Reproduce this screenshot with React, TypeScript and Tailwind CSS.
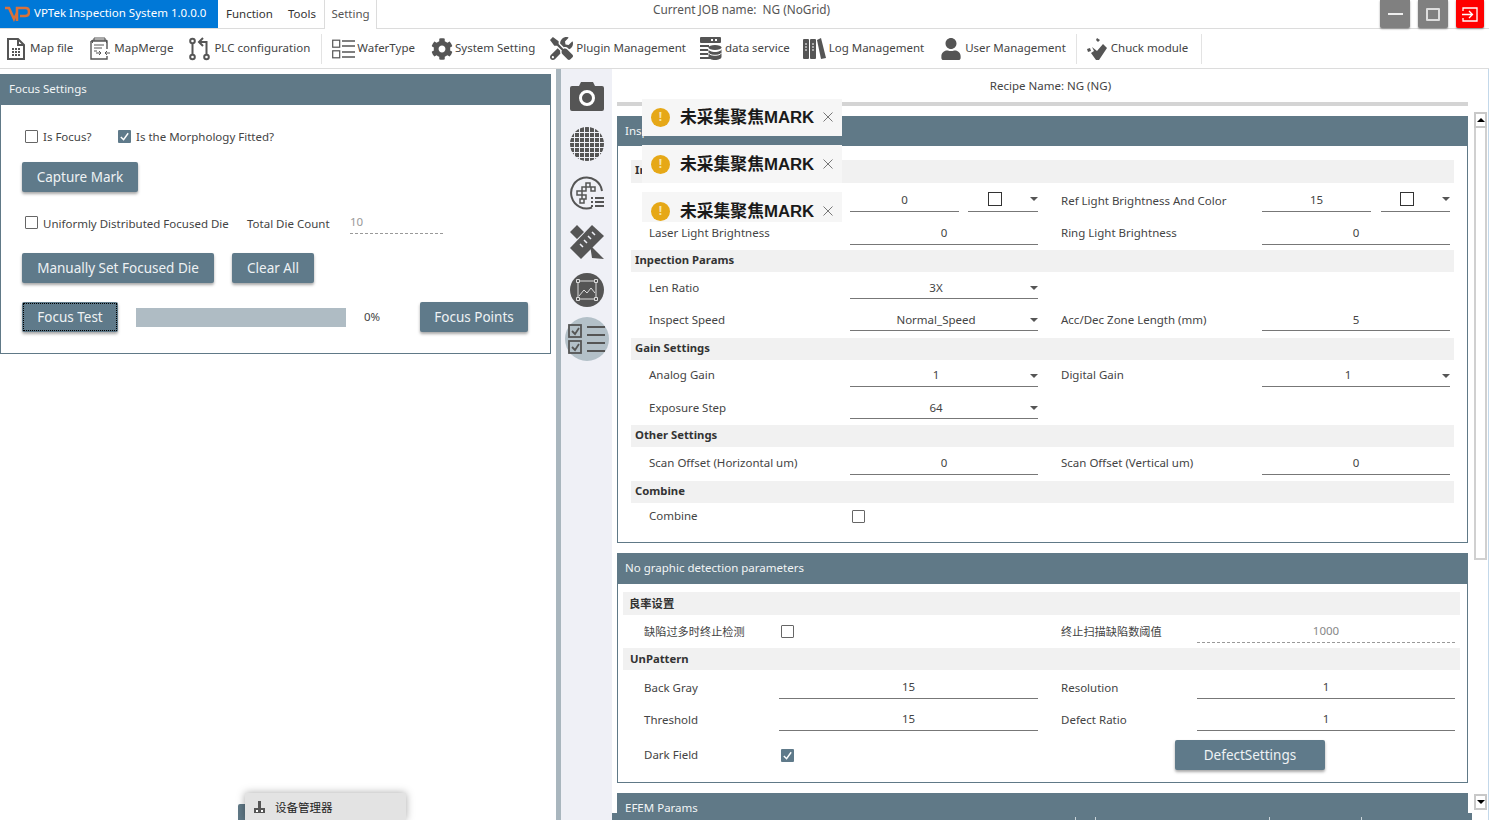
import React from "react";
import { FaCog, FaUser, FaTools } from "react-icons/fa";

const FONT = "font-['Noto_Sans','Noto_Sans_CJK_SC',sans-serif]";

function Check({ on = false, size = "w-[13px] h-[13px]" }: { on?: boolean; size?: string }) {
  return on ? (
    <span className={`${size} shrink-0 bg-[#5f7a8a] rounded-[1px] flex items-center justify-center`}>
      <svg viewBox="0 0 12 12" className="w-[11px] h-[11px]"><path d="M2 6.500 L5 9.500 L10 2.500" fill="none" stroke="#fff" strokeWidth="1.600" /></svg>
    </span>
  ) : (
    <span className={`${size} block shrink-0 border-[1.5px] border-[#666] rounded-[1px] bg-white`} />
  );
}

function Btn({ children, w, focus = false }: { children: React.ReactNode; w: string; focus?: boolean }) {
  return (
    <div className={`${w} h-[30px] shrink-0 bg-[#5f7a8a] rounded-[2px] shadow-[0_2px_3px_rgba(0,0,0,0.35)] text-[#eef2f4] text-[13.5px] flex items-center justify-center relative`}>
      {focus && <span className="absolute inset-[1px] border border-dotted border-black" />}
      {children}
    </div>
  );
}

function Caret({ c = "#555" }: { c?: string }) {
  return <span className="w-0 h-0 border-l-[4px] border-r-[4px] border-t-[4px] border-l-transparent border-r-transparent" style={{ borderTopColor: c }} />;
}

function Section({ children, pl = 4, pb = 2, pt = 0 }: { children: React.ReactNode; pl?: number; pb?: number; pt?: number }) {
  return <div className="bg-[#f1f1f1] text-[11.300px] font-bold text-[#333] flex items-center" style={{ paddingLeft: pl, paddingBottom: pb, paddingTop: pt }}>{children}</div>;
}

function Input({ v, ul = 27, pt = 6, select = false, muted = false, dashed = false }: { v?: string; ul?: number; pt?: number; select?: boolean; muted?: boolean; dashed?: boolean }) {
  return (
    <div className={`${dashed ? "border-b border-dashed border-[#999]" : "border-b border-[#777]"} relative flex justify-center leading-[20px] text-[11.500px] ${muted ? "text-[#888]" : "text-[#444]"} ${select ? "pr-[16px]" : ""}`} style={{ height: ul, paddingTop: pt }}>
      {v}
      {select && <span className="absolute right-0 top-[14px] flex"><Caret /></span>}
    </div>
  );
}

function Color({ ul = 29, pr = 16 }: { ul?: number; pr?: number }) {
  return (
    <div className="border-b border-[#777] relative flex justify-center items-center" style={{ height: ul, paddingRight: pr }}>
      <span className="w-[14px] h-[14px] border border-[#333] bg-white mt-[4px]" />
      <span className="absolute right-0 top-[14px] flex"><Caret /></span>
    </div>
  );
}

function Label({ children, pt = 6 }: { children?: React.ReactNode; pt?: number }) {
  return <div className="leading-[20px] text-[11.500px] text-[#444] whitespace-nowrap" style={{ paddingTop: pt }}>{children}</div>;
}

function Row({ h, children }: { h: number; children: React.ReactNode }) {
  return (
    <div className="grid grid-cols-[201px_188px_23px_201px_188px] items-start pl-[18px]" style={{ height: h }}>
      {children}
    </div>
  );
}

function Row2({ h, children }: { h: number; children: React.ReactNode }) {
  return (
    <div className="grid grid-cols-[135px_259px_23px_136px_258px] items-start pl-[21px]" style={{ height: h }}>
      {children}
    </div>
  );
}

function Gap() {
  return <div />;
}

function Tool({ icon, text, ml, gap = 3 }: { icon: React.ReactNode; text: string; ml: number; gap?: number }) {
  return (
    <div className="flex items-center shrink-0 whitespace-nowrap text-[11.500px] text-[#444]" style={{ marginLeft: ml }}>
      {icon}
      <span className="pb-[2px]" style={{ marginLeft: gap }}>{text}</span>
    </div>
  );
}

const G = "#555";

function IconMap() {
  return (
    <svg width="18" height="24" viewBox="0 0 18 24">
      <path d="M1 2 H11 L17 8 V22 H1 Z" fill="none" stroke={G} strokeWidth="2" />
      <path d="M11 2 V8 H17" fill="none" stroke={G} strokeWidth="2" />
      <path d="M5 11h2v2H5zM8 11h2v2H8zM11 11h2v2h-2zM5 14h2v2H5zM8 14h2v2H8zM11 14h2v2h-2zM5 17h2v2H5zM8 17h2v2H8zM11 17h2v2h-2z" fill={G} />
    </svg>
  );
}
function IconMerge() {
  return (
    <svg width="21" height="24" viewBox="0 0 21 24" fill="none" stroke={G} strokeWidth="1">
      <path d="M4 4 V1 H15 V4" />
      <path d="M2.500 6 V3 H16.500 V6" />
      <path d="M1 4 H17 V12 M1 4 V22 H17 V19" strokeWidth="1.400" />
      <path d="M4 8h10M4 11h8M4 14h3" />
      <path d="M6 16h5M9 14l2 2-2 2M20 16h-5M17 14l-2 2 2 2" />
    </svg>
  );
}
function IconPlc() {
  return (
    <svg width="22" height="24" viewBox="0 0 22 24" fill="none" stroke={G} strokeWidth="2">
      <circle cx="3.500" cy="4" r="2.300" /><circle cx="3.500" cy="20" r="2.300" /><circle cx="17.500" cy="20" r="2.300" />
      <path d="M3.500 6.500 V17.500 M17.500 17.500 V5 H11" />
      <path d="M14 1 L10 5 L14 9" />
    </svg>
  );
}
function IconWafer() {
  return (
    <svg width="23" height="20" viewBox="0 0 23 20" fill="none" stroke={G} strokeWidth="1.200">
      <rect x="0.700" y="1.200" width="7" height="7" /><rect x="0.700" y="11.800" width="7" height="7" />
      <path d="M10 2h13M10 7h13M10 13h13M10 18h13" strokeWidth="1.500" />
    </svg>
  );
}
function IconData() {
  return (
    <svg width="22" height="23" viewBox="0 0 22 23">
      <rect x="0" y="0" width="21" height="6" rx="1" fill={G} />
      <rect x="11" y="2" width="2" height="2" fill="#fff" /><rect x="15" y="2" width="2" height="2" fill="#fff" />
      <path d="M0 8h9v2H0zM0 12h8v2H0zM0 16h8v2H0zM0 20h10v2H0z" fill={G} />
      <ellipse cx="15" cy="10.500" rx="6.500" ry="2.500" fill={G} />
      <path d="M8.500 12v8c0 1.600 3 3 6.500 3s6.500-1.400 6.500-3v-8c0 1.600-3 3-6.500 3s-6.500-1.400-6.500-3z" fill={G} />
      <path d="M8.500 16c1 1.600 3.400 2.300 6.500 2.300s5.500-.7 6.500-2.300" stroke="#fff" fill="none" />
    </svg>
  );
}
function IconLog() {
  return (
    <svg width="23" height="22" viewBox="0 0 23 22">
      <rect x="0" y="1" width="6" height="20" rx="1" fill={G} /><rect x="7" y="1" width="6" height="20" rx="1" fill={G} />
      <path d="M14 2 L18 0 L23 20 L18 21 Z" fill={G} />
      <path d="M2 6h2M2 9h2M2 12h2M9 6h2M9 9h2M9 12h2" stroke="#fff" />
    </svg>
  );
}
function IconChuck() {
  return (
    <svg width="23" height="24" viewBox="0 0 23 24">
      <path d="M11 1 L14 3 L12 5 L10 3Z M1 12 L4 11 L5 14 L2 15Z" fill={G} />
      <path d="M6 10 L11 14 L17 7 L21 11 L13 23 L10 23 L5 16 L8 14 Z" fill={G} />
    </svg>
  );
}
function Sep() {
  return <div className="w-px h-[30px] bg-[#e3e3e3] shrink-0" />;
}

function SideBtn({ active = false, children }: { active?: boolean; children: React.ReactNode }) {
  return (
    <div className="h-[48.600px] flex items-center justify-center">
      <div className={`w-[44px] h-[44px] rounded-full flex items-center justify-center ${active ? "bg-[#b3c0c8]" : ""}`}>{children}</div>
    </div>
  );
}

function Toast({ outer, inner }: { outer: number; inner: number }) {
  return (
    <div className="w-[200px] bg-[#f6f6f6] overflow-hidden shrink-0" style={{ height: outer }}>
      <div className="flex items-center pl-[9px] text-[16.800px] font-bold text-[#1a1a1a] relative" style={{ height: inner }}>
        <span className="w-[19px] h-[19px] rounded-full bg-[#e6a817] text-[#f6e2b0] text-[12px] font-bold flex items-center justify-center mr-[10px]">!</span>
        <span className="font-['Liberation_Sans','Noto_Sans_CJK_SC',sans-serif] whitespace-nowrap pt-[2px]">未采集聚焦MARK</span>
        <svg className="absolute right-[9px]" width="10" height="10" viewBox="0 0 10 10"><path d="M0.500 0.500 L9.500 9.500 M9.500 0.500 L0.500 9.500" stroke="#777" /></svg>
      </div>
    </div>
  );
}

export default function App() {
  return (
    <div className={`${FONT} w-[1489px] h-[820px] overflow-hidden bg-white relative flex flex-col text-[#444]`}>
      {/* title bar */}
      <div className="h-[29px] shrink-0 flex border-b border-[#dcdcdc] relative">
        <div className="w-[218px] h-[28px] bg-[#0078d7] flex items-center pl-[5px] text-white text-[11.500px] shrink-0">
          <svg width="25" height="16" viewBox="0 0 25 16" className="mr-[4px]">
            <path d="M0 2 H4 L9 13 L12 7" fill="none" stroke="#d9713a" strokeWidth="2.500" />
            <path d="M12 15 V2 H21 Q24 2 24 6 Q24 10 20 10 H15" fill="none" stroke="#d9713a" strokeWidth="2.500" />
          </svg>
          <span className="whitespace-nowrap pb-[2px]">VPTek Inspection System 1.0.0.0</span>
        </div>
        <div className="text-[11.500px] text-[#333] flex items-center pl-[8px] w-[70px] h-[28px]">Function</div>
        <div className="text-[11.500px] text-[#333] flex items-center w-[36px] h-[28px]">Tools</div>
        <div className="w-[53px] h-[29px] border-x border-[#dcdcdc] bg-white text-[11.500px] text-[#555] flex items-center justify-center pb-[2px]">Setting</div>
        <div className="ml-[276px] text-[11.800px] text-[#555] pt-[1px] leading-[16px] whitespace-nowrap">Current JOB name:&nbsp; NG (NoGrid)</div>
        <div className="absolute right-[5px] top-0 flex gap-[8px]">
          <div className="w-[30px] h-[28px] bg-[#808080] rounded-b-[2px] shadow-[0_1px_2px_rgba(0,0,0,0.4)] flex items-center justify-center">
            <span className="w-[15px] h-[2px] bg-[#eee]" />
          </div>
          <div className="w-[30px] h-[28px] bg-[#808080] rounded-b-[2px] shadow-[0_1px_2px_rgba(0,0,0,0.4)] flex items-center justify-center">
            <span className="w-[14px] h-[13px] border-2 border-[#ddd] rounded-[1px]" />
          </div>
          <div className="w-[28px] h-[28px] bg-[#f00] rounded-b-[2px] shadow-[0_1px_2px_rgba(0,0,0,0.4)] flex items-center justify-center">
            <svg width="16" height="15" viewBox="0 0 16 15" fill="none" stroke="#fff" strokeWidth="1.300">
              <path d="M1 4 V1 H15 V14 H1 V11" /><path d="M0 7.500 H10 M7 4 L10.500 7.500 L7 11" />
            </svg>
          </div>
        </div>
      </div>

      {/* toolbar */}
      <div className="h-[40px] shrink-0 flex items-center border-b border-[#dcdcdc]">
        <Tool ml={7} icon={<IconMap />} text="Map file" gap={5} />
        <Tool ml={17} icon={<IconMerge />} text="MapMerge" gap={3} />
        <Tool ml={16} icon={<IconPlc />} text="PLC configuration" gap={3} />
        <div className="ml-[11px]"><Sep /></div>
        <Tool ml={10} icon={<IconWafer />} text="WaferType" gap={2} />
        <Tool ml={16} icon={<FaCog size={22} color={G} />} text="System Setting" gap={2} />
        <Tool ml={15} icon={<FaTools size={23} color={G} />} text="Plugin Management" gap={3} />
        <Tool ml={14} icon={<IconData />} text="data service" gap={3} />
        <Tool ml={13} icon={<IconLog />} text="Log Management" gap={3} />
        <Tool ml={16} icon={<FaUser size={22} color={G} />} text="User Management" gap={3} />
        <div className="ml-[10px]"><Sep /></div>
        <Tool ml={9} icon={<IconChuck />} text="Chuck module" gap={2} />
        <div className="ml-[13px]"><Sep /></div>
      </div>

      {/* main */}
      <div className="flex-1 flex min-h-0">
        {/* left */}
        <div className="w-[556px] shrink-0 pt-[5px]">
          <div className="w-[551px] h-[280px] border border-[#607987] border-t-0 flex flex-col">
            <div className="h-[31px] -mx-px bg-[#607987] text-[#f2f5f6] text-[11.500px] flex items-center pl-[9px] pb-[2px] shrink-0">Focus Settings</div>
            <div className="pl-[21px] pr-[22px] flex flex-col flex-1">
              <div className="flex items-center mt-[24px] h-[16px] text-[11.500px] pl-[3px]">
                <span className="-mt-[2px]"><Check /></span>
                <span className="ml-[5px] w-[75px]">Is Focus?</span>
                <span className="-mt-[2px]"><Check on /></span>
                <span className="ml-[5px] whitespace-nowrap">Is the Morphology Fitted?</span>
              </div>
              <div className="mt-[17px]"><Btn w="w-[116px]">Capture Mark</Btn></div>
              <div className="flex items-center mt-[21px] h-[21px] text-[11.500px] pl-[3px]">
                <span className="-mt-[2px]"><Check /></span>
                <span className="ml-[5px] whitespace-nowrap w-[204px]">Uniformly Distributed Focused Die</span>
                <span className="whitespace-nowrap w-[103px]">Total Die Count</span>
                <div className="w-[93px] h-[21px] border-b border-dashed border-[#999] text-[#999] leading-[18px]">10</div>
              </div>
              <div className="flex gap-[18px] mt-[19px]">
                <Btn w="w-[192px]">Manually Set Focused Die</Btn>
                <Btn w="w-[82px]">Clear All</Btn>
              </div>
              <div className="flex items-center mt-[19px]">
                <Btn w="w-[96px]" focus>Focus Test</Btn>
                <div className="ml-[18px] w-[210px] h-[19px] bg-[#afbcc4]" />
                <span className="ml-[18px] text-[11.500px] w-[56px]">0%</span>
                <Btn w="w-[108px]">Focus Points</Btn>
              </div>
            </div>
          </div>
        </div>
        {/* splitter */}
        <div className="w-[5px] shrink-0 bg-[#a9b6be]" />
        {/* sidebar */}
        <div className="w-[51px] shrink-0 bg-[#eff0f6] pt-[2.500px]">
          <SideBtn>
            <svg width="34" height="30" viewBox="0 0 34 30">
              <path d="M2 5 H9 L11 1 H23 L25 5 H32 Q34 5 34 7 V28 Q34 30 32 30 H2 Q0 30 0 28 V7 Q0 5 2 5Z" fill={G} />
              <circle cx="17" cy="17" r="6.500" fill="none" stroke="#fff" strokeWidth="3" />
            </svg>
          </SideBtn>
          <SideBtn>
            <svg width="34" height="34" viewBox="0 0 34 34">
              <circle cx="17" cy="17" r="17" fill={G} />
              <path d="M0 5.500H34M0 10.500H34M0 15.500H34M0 20.500H34M0 25.500H34M0 30.500H34M4.500 0V34M9.500 0V34M14.500 0V34M19.500 0V34M24.500 0V34M29.500 0V34" stroke="#eff0f6" strokeWidth="1" />
            </svg>
          </SideBtn>
          <SideBtn>
            <svg width="34" height="34" viewBox="0 0 34 34" fill="none" stroke={G}>
              <path d="M22 31.500 A15.500 15.500 0 1 1 32 15" strokeWidth="2" />
              <path d="M7 15h5v4H7zM12 11h4v4h-4zM12 19h4v4h-4zM16 7h4v4h-4zM10 23h4v4h-4zM21 11h4v4h-4z" strokeWidth="1.500" />
              <path d="M21 22h2M25 22h9M21 26h2M25 26h9M21 30h2M25 30h9" strokeWidth="1.800" />
            </svg>
          </SideBtn>
          <SideBtn>
            <svg width="34" height="34" viewBox="0 0 34 34">
              <path d="M22 0 L34 11 L11 34 L0 23 Z" fill={G} />
              <path d="M0 7 L7 0 L14 7 L7 14 Z M20 20 L27 27 L34 34 L22 33 Z" fill={G} />
              <path d="M14 15l3 3M18 11l3 3M22 7l3 3M10 19l3 3" stroke="#eff0f6" strokeWidth="1.500" />
            </svg>
          </SideBtn>
          <SideBtn>
            <svg width="34" height="34" viewBox="0 0 34 34">
              <circle cx="17" cy="17" r="17" fill={G} />
              <rect x="8" y="8" width="18" height="18" fill="none" stroke="#ddd" />
              <path d="M9 23 L14 17 L17 20 L21 15 L25 20" fill="none" stroke="#ddd" />
              <path d="M6.500 6.500h3v3h-3zM24.500 6.500h3v3h-3zM6.500 24.500h3v3h-3zM24.500 24.500h3v3h-3z" fill={G} stroke="#ddd" />
            </svg>
          </SideBtn>
          <SideBtn active>
            <svg width="38" height="30" viewBox="0 0 38 30" fill="none" stroke={G} strokeWidth="1.800">
              <rect x="1" y="1" width="12" height="12" /><rect x="1" y="17" width="12" height="12" />
              <path d="M4 7 L7 10 L11 4M4 23 L7 26 L11 20" />
              <path d="M19 3h18M19 11h18M19 19h18M19 27h18" strokeWidth="2" />
            </svg>
          </SideBtn>
        </div>
        {/* right content */}
        <div className="flex-1 min-w-0 flex relative">
          <div className="w-[860px] shrink-0 pl-[5px] pr-[4px] overflow-hidden">
            <div className="h-[33px] flex items-center justify-center text-[11.500px] pl-[16px]">Recipe Name: NG (NG)</div>
            <div className="h-[4px] bg-[#d4d4d4]" />
            <div className="h-[10px]" />
            {/* Inspection */}
            <div className="h-[427px] border border-[#607987] border-t-0 flex flex-col">
              <div className="h-[30px] -mx-px bg-[#607987] text-[#f2f5f6] text-[11.500px] flex items-center pl-[8px] shrink-0">Inspection Params</div>
              <div className="pt-[14px] pl-[13px] pr-[13px] flex flex-col">
                <div className="h-[23px] grid"><Section>Inspection Light</Section></div>
                <Row h={34}><Label pt={8}>Coax Light Brightness</Label><div className="grid grid-cols-[109px_70px] gap-[9px]"><Input v="0" ul={29} pt={7} /><Color /></div><Gap /><Label pt={8}>Ref Light Brightness And Color</Label><div className="grid grid-cols-[109px_69px] gap-[10px]"><Input v="15" ul={29} pt={7} /><Color pr={18} /></div></Row>
                <Row h={33}><Label pt={6}>Laser Light Brightness</Label><Input v="0" ul={28} /><Gap /><Label pt={6}>Ring Light Brightness</Label><Input v="0" ul={28} /></Row>
                <div className="h-[22px] grid"><Section>Inpection Params</Section></div>
                <Row h={32}><Label>Len Ratio</Label><Input v="3X" select /><Gap /><Gap /><Gap /></Row>
                <Row h={34}><Label>Inspect Speed</Label><Input v="Normal_Speed" select /><Gap /><Label>Acc/Dec Zone Length (mm)</Label><Input v="5" /></Row>
                <div className="h-[22px] grid"><Section>Gain Settings</Section></div>
                <Row h={32}><Label pt={5}>Analog Gain</Label><Input v="1" select pt={5} /><Gap /><Label pt={5}>Digital Gain</Label><Input v="1" select pt={5} /></Row>
                <Row h={33}><Label>Exposure Step</Label><Input v="64" select /><Gap /><Gap /><Gap /></Row>
                <div className="h-[22px] grid"><Section>Other Settings</Section></div>
                <Row h={34}><Label>Scan Offset (Horizontal um)</Label><Input v="0" ul={28} /><Gap /><Label>Scan Offset (Vertical um)</Label><Input v="0" ul={28} /></Row>
                <div className="h-[22px] grid"><Section>Combine</Section></div>
                <Row h={27}><Label pt={3}>Combine</Label><div className="pt-[7px] pl-[2px]"><Check /></div><Gap /><Gap /><Gap /></Row>
              </div>
            </div>
            <div className="h-[10px]" />
            {/* no graphic */}
            <div className="h-[230px] border border-[#607987] border-t-0 flex flex-col">
              <div className="h-[31px] -mx-px bg-[#607987] text-[#f2f5f6] text-[11.500px] flex items-center pl-[8px] pb-[2px] shrink-0">No graphic detection parameters</div>
              <div className="pt-[8px] pl-[5px] pr-[7px] flex flex-col">
                <div className="h-[23px] grid"><Section pl={6} pb={0} pt={1}>良率设置</Section></div>
                <Row2 h={33}><div className="pt-[7px] leading-[20px] text-[11.200px] whitespace-nowrap">缺陷过多时终止检测</div><div className="pt-[10px] pl-[2px]"><Check /></div><Gap /><div className="pt-[7px] leading-[20px] text-[11.200px] whitespace-nowrap">终止扫描缺陷数阈值</div><Input v="1000" muted dashed ul={28} /></Row2>
                <div className="h-[22px] grid"><Section pl={7} pb={0} pt={1}>UnPattern</Section></div>
                <Row2 h={32}><Label pt={8}>Back Gray</Label><Input v="15" ul={29} pt={7} /><Gap /><Label pt={8}>Resolution</Label><Input v="1" ul={29} pt={7} /></Row2>
                <Row2 h={32}><Label pt={8}>Threshold</Label><Input v="15" ul={29} pt={7} /><Gap /><Label pt={8}>Defect Ratio</Label><Input v="1" ul={29} pt={7} /></Row2>
                <Row2 h={40}>
                  <div className="pt-[11px] leading-[20px] text-[11.500px]">Dark Field</div>
                  <div className="pt-[15px] pl-[2px]"><Check on /></div>
                  <Gap /><Gap />
                  <div className="pt-[6px] -ml-[22px]"><Btn w="w-[150px]">DefectSettings</Btn></div>
                </Row2>
              </div>
            </div>
            <div className="h-[10px]" />
            <div className="h-[28px] bg-[#607987] text-[#f2f5f6] text-[11.500px]">
              <div className="h-[20px] flex items-center pl-[8px] pt-[10px]">EFEM Params</div>
              <div className="h-[8px] -ml-[5px] -mr-[4px] bg-[#607987] relative">
                <span className="absolute left-[463px] bottom-0 w-px h-[4px] bg-[#ccd5da]" />
                <span className="absolute left-[483px] bottom-0 w-px h-[4px] bg-[#ccd5da]" />
                <span className="absolute left-[657px] bottom-0 w-px h-[4px] bg-[#ccd5da]" />
                <span className="absolute left-[749px] bottom-0 w-px h-[4px] bg-[#ccd5da]" />
              </div>
            </div>
          </div>
          {/* scrollbar */}
          <div className="flex-1 flex flex-col pl-[2px] pr-[1px] pt-[43px] pb-[10px] border-r border-[#c3d8ea]">
            <div className="h-[16px] border-2 border-[#c8c8c8] bg-white flex items-center justify-center shrink-0">
              <span className="w-0 h-0 border-l-[4px] border-r-[4px] border-b-[4px] border-l-transparent border-r-transparent border-b-black" />
            </div>
            <div className="flex-1 relative">
              <div className="h-[432px] border-x-2 border-b-2 border-[#d0d0d0] bg-white" />
            </div>
            <div className="h-[16px] border-2 border-[#c8c8c8] bg-white flex items-center justify-center shrink-0">
              <span className="w-0 h-0 border-l-[4px] border-r-[4px] border-t-[4px] border-l-transparent border-r-transparent border-t-black" />
            </div>
          </div>
          {/* toasts */}
          <div className="absolute left-[30px] top-[30px] flex flex-col gap-[9px]">
            <Toast outer={37} inner={36} />
            <Toast outer={38} inner={38} />
            <Toast outer={30} inner={38} />
          </div>
        </div>
      </div>

      {/* taskbar jump list */}
      <div className="absolute left-[238px] top-[804px] w-[10px] h-[16px] bg-[#607987] rounded-tl-[2px]" />
      <div className="absolute left-[245px] top-[793px] w-[161px] h-[27px] bg-[#e3e3e3] shadow-[0_0_8px_rgba(0,0,0,0.35)] flex items-center pl-[8px] pt-[3px] text-[11.500px] text-[#222]">
        <svg width="13" height="14" viewBox="0 0 13 14" className="mr-[9px]">
          <path d="M5 0h3v7H5zM1 7h11v5H1z" fill="#555" /><rect x="3" y="9" width="2" height="2" fill="#fff" /><rect x="8" y="9" width="2" height="2" fill="#fff" />
        </svg>
        设备管理器
      </div>
    </div>
  );
}
